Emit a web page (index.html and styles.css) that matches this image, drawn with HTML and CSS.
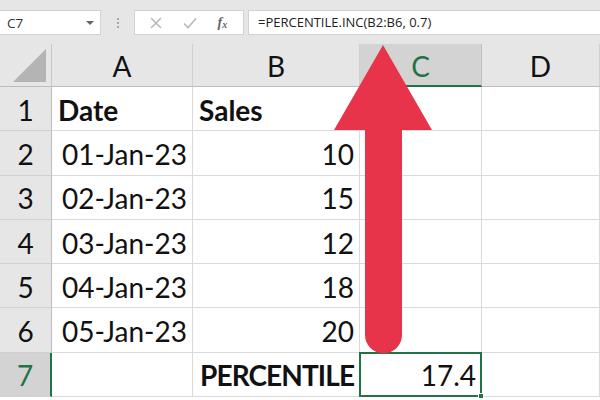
FILE: index.html
```html
<!DOCTYPE html>
<html>
<head>
<meta charset="utf-8">
<link rel="stylesheet" href="styles.css">
</head>
<body>
<div class="app">
  <div class="toolbar">
    <div class="namebox"><span>C7</span><span class="caret"></span></div>
    <div class="dots"><i></i><i></i><i></i></div>
    <div class="buttons">
      <svg class="ico" width="14" height="14" viewBox="0 0 14 14"><path d="M2 2 L12 12 M12 2 L2 12" stroke="#b9b9b9" stroke-width="1.6" fill="none"/></svg>
      <svg class="ico" width="16" height="14" viewBox="0 0 16 14"><path d="M2 7.5 L6 11.5 L14 2.5" stroke="#b9b9b9" stroke-width="1.6" fill="none"/></svg>
      <span class="fx">f<sub>x</sub></span>
    </div>
    <div class="formula">=PERCENTILE.INC(B2:B6, 0.7)</div>
  </div>
  <div class="sheet">
    <div class="corner"><span class="tri"></span></div>
    <div class="colh">A</div>
    <div class="colh">B</div>
    <div class="colh sel">C</div>
    <div class="colh">D</div>

    <div class="rowh">1</div>
    <div class="cell bold">Date</div>
    <div class="cell bold">Sales</div>
    <div class="cell"></div>
    <div class="cell"></div>

    <div class="rowh">2</div>
    <div class="cell num">01-Jan-23</div>
    <div class="cell num">10</div>
    <div class="cell"></div>
    <div class="cell"></div>

    <div class="rowh">3</div>
    <div class="cell num">02-Jan-23</div>
    <div class="cell num">15</div>
    <div class="cell"></div>
    <div class="cell"></div>

    <div class="rowh">4</div>
    <div class="cell num">03-Jan-23</div>
    <div class="cell num">12</div>
    <div class="cell"></div>
    <div class="cell"></div>

    <div class="rowh">5</div>
    <div class="cell num">04-Jan-23</div>
    <div class="cell num">18</div>
    <div class="cell"></div>
    <div class="cell"></div>

    <div class="rowh">6</div>
    <div class="cell num">05-Jan-23</div>
    <div class="cell num">20</div>
    <div class="cell"></div>
    <div class="cell"></div>

    <div class="rowh sel">7</div>
    <div class="cell"></div>
    <div class="cell bold tight">PERCENTILE</div>
    <div class="cell num active">17.4<span class="handle"></span></div>
    <div class="cell"></div>
  </div>
  <svg class="arrow" width="600" height="400" viewBox="0 0 600 400">
    <path d="M383 45 L432 130 L402 130 L402 335 A18.5 18.5 0 0 1 365 335 L365 130 L334 130 Z" fill="#e8344a"/>
  </svg>
</div>
</body>
</html>
```

FILE: styles.css
```css
* { box-sizing: border-box; }
html, body { margin: 0; padding: 0; }
body { width: 600px; height: 400px; overflow: hidden; background: #fff; }
.app { position: relative; width: 600px; height: 400px; overflow: hidden; }

.toolbar {
  height: 44px;
  background: #e6e6e6;
  display: flex;
  align-items: flex-start;
  padding-top: 10px;
  font-family: "Open Sans", "Noto Sans", sans-serif;
  font-size: 13px;
  color: #333;
}
.namebox {
  width: 101px; height: 25px;
  background: #fff;
  border: 1px solid #d2d2d2;
  border-left: none;
  display: flex; align-items: center; justify-content: space-between;
  padding: 0 6px 0 7px;
  font-size: 13.5px;
}
.caret {
  width: 0; height: 0;
  border-left: 4px solid transparent;
  border-right: 4px solid transparent;
  border-top: 4px solid #666;
}
.dots {
  width: 33px; height: 25px;
  display: flex; flex-direction: column; align-items: center; justify-content: center; gap: 2px;
}
.dots i { width: 2px; height: 2px; background: #a8a8a8; display: block; }
.buttons {
  width: 110px; height: 25px;
  background: #fff;
  border: 1px solid #d2d2d2;
  display: flex; align-items: center; justify-content: space-around;
  padding: 0 6px 0 4px;
}
.fx {
  font-family: "Liberation Serif", serif;
  font-style: italic; font-weight: bold;
  font-size: 14px; color: #666;
}
.fx sub { font-size: 10px; vertical-align: -1px; }
.formula {
  margin-left: 4px;
  flex: 1;
  height: 25px;
  background: #fff;
  border: 1px solid #d2d2d2;
  border-right: none;
  padding-left: 9px;
  line-height: 23px;
  color: #222;
}

.sheet {
  display: grid;
  grid-template-columns: 52px 141px 167px 122px 118px;
  grid-template-rows: 43px repeat(7, 44.3px);
  font-family: Lato, "Open Sans", sans-serif;
  font-size: 28px;
  color: #111;
}
.corner {
  position: relative;
  background: #e6e6e6;
  border-right: 1px solid #c8c8c8;
  border-bottom: 1px solid #bdbdbd;
}
.tri {
  position: absolute; right: 5px; bottom: 4px;
  width: 0; height: 0;
  border-left: 33px solid transparent;
  border-bottom: 33px solid #b4b4b4;
}
.colh {
  background: #e6e6e6;
  border-right: 1px solid #d0d0d0;
  border-bottom: 1px solid #bdbdbd;
  display: flex; align-items: center; justify-content: center;
  padding-top: 2px;
  color: #111;
}
.colh.sel {
  background: #d3d3d3;
  color: #217346;
  border-bottom: 2px solid #217346;
  border-right-color: #c0c0c0;
}
.rowh {
  background: #e6e6e6;
  border-right: 1px solid #bdbdbd;
  border-bottom: 1px solid #d0d0d0;
  display: flex; align-items: center; justify-content: center;
  padding-top: 2px;
}
.rowh.sel {
  background: #d3d3d3;
  color: #217346;
  border-right: 2px solid #217346;
}
.cell {
  border-right: 1px solid #dadada;
  border-bottom: 1px solid #dadada;
  display: flex; align-items: center;
  padding: 2px 5px 0 6px;
  white-space: nowrap;
  overflow: hidden;
}
.bold { font-weight: bold; }
.num { justify-content: flex-end; }
.tight { padding-left: 7px; padding-right: 0; letter-spacing: -0.9px; }
.active {
  position: relative;
  overflow: visible;
  border: 2px solid #217346;
  margin: -1px 0 0 -1px;
  padding-right: 4px;
}
.handle {
  position: absolute; right: -4px; bottom: -4px;
  width: 6px; height: 6px;
  background: #217346;
  border: 1px solid #fff;
}
.arrow { position: absolute; left: 0; top: 0; pointer-events: none; }
```
